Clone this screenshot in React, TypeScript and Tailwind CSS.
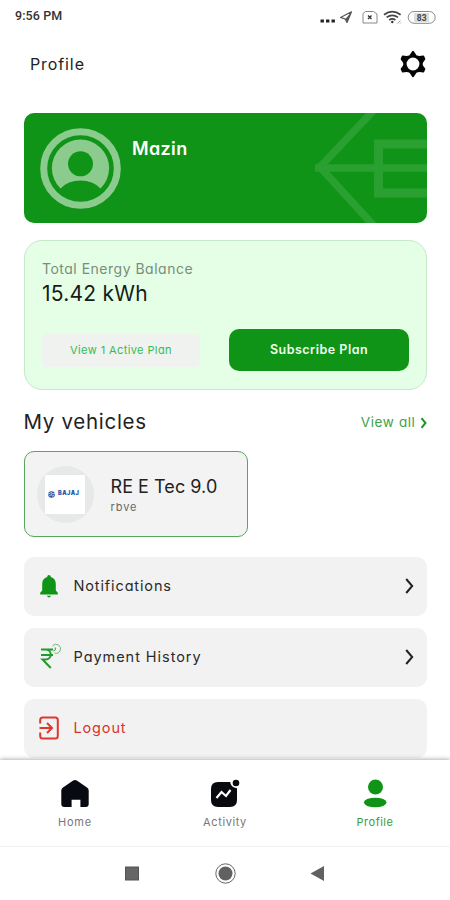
import type { ReactNode } from "react";

function StatusBar() {
  return (
    <div className="flex h-[33px] items-center justify-between pl-[15px] pr-[14px]">
      <span className="font-[Roboto,sans-serif] text-[12.500px] font-medium tracking-[0.1px] text-[#333]">9:56 PM</span>
      <svg width="118" height="20" viewBox="318 6 118 20" fill="none">
        <g fill="#222">
          <rect x="320.5" y="18.500" width="3.4" height="3" />
          <rect x="326" y="18.500" width="3.4" height="3" />
          <rect x="331.500" y="18.500" width="3.400" height="3" />
        </g>
        <path d="M340.500 16.500 351.500 10.800 347 21.500 345 17.800Z" stroke="#555" strokeWidth="1.200" strokeLinejoin="round" />
        <path d="M351.500 10.800 347 21.500 345.500 18Z" fill="#555" />
        <path d="M365.500 10.500h8l3.500 2.500v9h-14v-9.500z" stroke="#888" strokeWidth="1" />
        <path d="m368 14.500 3.500 3.500m0-3.500L368 18" stroke="#333" strokeWidth="1.300" />
        <g stroke="#444" strokeWidth="1.700">
          <path d="M384 13.700q8.300-6 16.600 0" />
          <path d="M386.600 16.400q5.700-4.200 11.400 0" />
          <path d="M389.200 19q3.100-2.300 6.200 0" />
        </g>
        <circle cx="392.300" cy="21" r="1.200" fill="#333" />
        <path d="m397.500 22.500 3-3m-.5 3 1-1" stroke="#888" strokeWidth=".8" />
        <rect x="408.200" y="10.500" width="27" height="11.800" rx="5.900" stroke="#888" />
        <rect x="414" y="12" width="15" height="9" fill="#ddd" />
        <text x="421.700" y="19.500" textAnchor="middle" className="font-[Roboto,sans-serif] text-[8.500px] font-bold" fill="#444">83</text>
      </svg>
    </div>
  );
}

function Chevron({ small = false }: { small?: boolean }) {
  return small ? (
    <svg width="7" height="12" viewBox="0 0 7 12" fill="none">
      <path d="m1.500 1.200 4 4.800-4 4.800" stroke="#1f952b" strokeWidth="2" />
    </svg>
  ) : (
    <svg width="9" height="16" viewBox="0 0 9 16" fill="none">
      <path d="m1.200 1 6 7-6 7" stroke="#222" strokeWidth="2" />
    </svg>
  );
}

function Row({ icon, children, red = false }: { icon: ReactNode; children: ReactNode; red?: boolean }) {
  return (
    <div className="flex h-[59px] shrink-0 items-center rounded-[10px] bg-[#f2f2f2] pb-px pl-[12px] pr-[13px]">
      <div className="flex w-[38px] shrink-0">{icon}</div>
      <span className={red ? "grow text-[#d9342c]" : "grow text-[#2a2a2a]"}>{children}</span>
      {!red && <Chevron />}
    </div>
  );
}

export default function App() {
  return (
    <div className="flex h-[900px] w-[450px] flex-col overflow-hidden bg-white font-[Inter,sans-serif] [font-feature-settings:'cv11']">
      <StatusBar />
      <header className="flex h-[62px] shrink-0 items-center justify-between pl-[30px] pr-[23px]">
        <h1 className="text-[16px] tracking-[0.9px] text-[#222]">Profile</h1>
        <svg width="28" height="28" viewBox="0 0 28 28">
          <path
            fillRule="evenodd"
            fill="#050505"
            stroke="#050505"
            strokeWidth="2"
            strokeLinejoin="round"
            d="M14 1.800 17 6.200Q19.500 7.500 24.300 6.600L25.300 9Q22.600 12 22.600 14T25.300 19L24.300 21.400Q19.500 20.500 17 21.800L14 26.200 11 21.800Q8.500 20.500 3.700 21.400L2.700 19Q5.400 16 5.400 14T2.700 9L3.700 6.600Q8.500 7.500 11 6.200ZM14 6.600a7.400 7.400 0 1 0 0 14.800 7.400 7.400 0 0 0 0-14.800Z"
          />
        </svg>
      </header>

      <main className="flex h-[665px] shrink-0 flex-col overflow-hidden px-[23.500px] pt-[18px]">
        <section className="flex h-[110px] shrink-0 justify-between overflow-hidden rounded-[10px] bg-[#109417] pl-[16.500px]">
          <div className="flex">
            <svg className="mt-[15px]" width="81" height="81" viewBox="0 0 81 81" fill="none">
              <circle cx="40.500" cy="40.500" r="36.800" stroke="#8bcc8e" strokeWidth="7" />
              <path d="M20.500 60.500A28.600 28.600 0 1 1 60.500 60.500Q53 52.500 40.500 52.500T20.500 60.500Z" fill="#8bcc8e" />
              <circle cx="40.500" cy="35.800" r="12.500" fill="#109417" />
            </svg>
            <h2 className="ml-[11px] mt-[22px] text-[18px] font-semibold leading-[27px] tracking-[0.35px] text-white">Mazin</h2>
          </div>
          <svg width="113" height="110" viewBox="0 0 113 110" fill="none" stroke="#2aa030" strokeWidth="7.500">
            <path d="M60-3 6 54 60 113" />
            <path d="M1 55h112" />
            <path d="M113 31H64.500v49H113" strokeWidth="9" />
          </svg>
        </section>

        <section className="mt-[17px] flex h-[150px] shrink-0 flex-col rounded-[18px] border border-[#c5e9c9] bg-[#e4ffe6] px-[17.500px] pt-[17px]">
          <span className="text-[14px] leading-[22px] tracking-[0.5px] text-[#7b8c7d]">Total Energy Balance</span>
          <span className="text-[21px] leading-[28px] tracking-[0.25px] text-[#151d16]">15.42 kWh</span>
          <div className="-mr-px mt-[21px] flex items-center justify-between">
            <button className="h-[33px] w-[158px] rounded-[5px] bg-[#f0f2f0] text-[11px] tracking-[0.4px] text-[#32bd55]">View 1 Active Plan</button>
            <button className="h-[42px] w-[180px] rounded-[10px] bg-[#109417] text-[12.500px] font-semibold tracking-[0.5px] text-[#ecffed]">Subscribe Plan</button>
          </div>
        </section>

        <div className="mt-[17px] flex h-[31px] shrink-0 items-center justify-between">
          <h2 className="text-[20.500px] tracking-[0.7px] text-[#222]">My vehicles</h2>
          <a className="flex items-center gap-[4px] text-[13.500px] tracking-[0.6px] text-[#40a149]">
            View all <Chevron small />
          </a>
        </div>

        <section className="mt-[13px] flex h-[86px] w-[224.500px] shrink-0 items-center rounded-[10px] border border-[#55a85b] bg-[#f3f3f3] pl-[12px]">
          <div className="flex size-[57px] items-center justify-center rounded-full bg-[#e7e9e8]">
            <div className="flex h-[39px] w-[40px] items-center justify-center gap-[3px] bg-white">
              <svg width="7" height="7" viewBox="0 0 8 8">
                <circle cx="4" cy="4" r="3.800" fill="#2555a5" />
                <path d="M0 3.800 4 1.500 4.500 3H8M1 6l3-2 1 2 2-1" fill="none" stroke="#fff" strokeWidth=".8" />
              </svg>
              <span className="w-[24px] text-[5.500px] font-black leading-none tracking-[0.5px] text-[#2555a5]">BAJAJ</span>
            </div>
          </div>
          <div className="ml-[17px] flex flex-col pt-[3px]">
            <span className="text-[18px] leading-[24px] tracking-[0.05px] text-[#222]">RE E Tec 9.0</span>
            <span className="text-[11px] leading-[17px] tracking-[0.9px] text-[#666]">rbve</span>
          </div>
        </section>

        <div className="mt-[20px] flex shrink-0 flex-col gap-[12px] text-[14.500px]">
          <Row
            icon={
              <svg width="26" height="26" viewBox="0 0 26 26" fill="#109417">
                <path d="M11.200 4c0-2.700 3.600-2.700 3.600 0 3.300 1 5 3.500 5 7v6.500l2 2.300v1.700H4.200v-1.700l2-2.300V11c0-3.500 1.700-6 5-7ZM10.800 22.700h4.400q-2.200 3.600-4.400 0Z" />
              </svg>
            }
          >
            <span className="tracking-[0.87px]">Notifications</span>
          </Row>
          <Row
            icon={
              <svg width="28" height="28" viewBox="0 0 28 28" fill="none" stroke="#219b2b">
                <path d="M5 6.500h12M5 12h12M5 6.500h4.500c7 0 7 10 0 10H6.500l8.300 8.500" strokeWidth="2" />
                <path d="M16.500 3a4.500 4.500 0 1 1 2 7" strokeWidth="1" stroke="#6cb873" />
                <path d="M19.300 4.500v2.500l-2 1" strokeWidth=".9" />
              </svg>
            }
          >
            <span className="tracking-[0.95px]">Payment History</span>
          </Row>
          <Row
            red
            icon={
              <svg width="26" height="26" viewBox="0 0 26 26" fill="none" stroke="#df3730" strokeWidth="2">
                <path d="M4.200 8.500V5q0-2.500 2.500-2.500h12.600q2.500 0 2.500 2.500v16q0 2.500-2.500 2.500H6.700q-2.500 0-2.500-2.500v-3.500M3.500 13h12M11 8l5 5-5 5" />
              </svg>
            }
          >
            <span className="tracking-[0.85px]">Logout</span>
          </Row>
        </div>
      </main>

      <nav className="z-10 grid h-[87px] shrink-0 grid-cols-3 border-b border-[#f3f3f3] bg-white pt-[16px] text-[11px] text-[#777] shadow-[0_-1px_4px_rgba(0,0,0,0.3)]">
        <div className="flex flex-col items-center">
          <svg width="34" height="34" viewBox="0 0 34 34">
            <path d="M15.200 4.500q1.800-1.200 3.600 0l10.200 7q1.700 1.200 1.700 3V28q0 3-3 3h-5.300v-7.300h-8.800V31H6.300q-3 0-3-3V14.500q0-1.800 1.700-3Z" fill="#080a12" />
          </svg>
          <span className="mt-[4px] leading-[17px] tracking-[0.8px]">Home</span>
        </div>
        <div className="flex flex-col items-center">
          <svg width="34" height="34" viewBox="0 0 34 34" fill="none">
            <path d="M10 6h12.200q.3 5.500 6.800 6.300V24q0 7-7 7H10q-7 0-7-7V13q0-7 7-7Z" fill="#080a0e" />
            <circle cx="28" cy="7" r="3.300" fill="#080a0e" />
            <path d="m8.500 22 5-6 4.500 4 4.500-6" stroke="#fff" strokeWidth="2.200" />
          </svg>
          <span className="mt-[4px] leading-[17px] tracking-[0.6px]">Activity</span>
        </div>
        <div className="flex flex-col items-center text-[#379d40]">
          <svg width="34" height="34" viewBox="0 0 34 34" fill="#109417">
            <circle cx="17.500" cy="11" r="7.500" />
            <ellipse cx="17.200" cy="26.500" rx="11.300" ry="4.800" />
          </svg>
          <span className="mt-[4px] leading-[17px] tracking-[0.5px]">Profile</span>
        </div>
      </nav>

      <footer className="z-20 flex h-[53px] shrink-0 items-center justify-center bg-white pb-px">
        <svg width="220" height="24" viewBox="115 861 220 24">
          <rect x="125.500" y="867" width="13" height="13" fill="#666" stroke="#555" />
          <circle cx="225.500" cy="873.500" r="9.700" fill="none" stroke="#666" />
          <circle cx="225.500" cy="873.500" r="7" fill="#616161" />
          <path d="M324 866v15l-13.500-7.500Z" fill="#616161" />
        </svg>
      </footer>
    </div>
  );
}
